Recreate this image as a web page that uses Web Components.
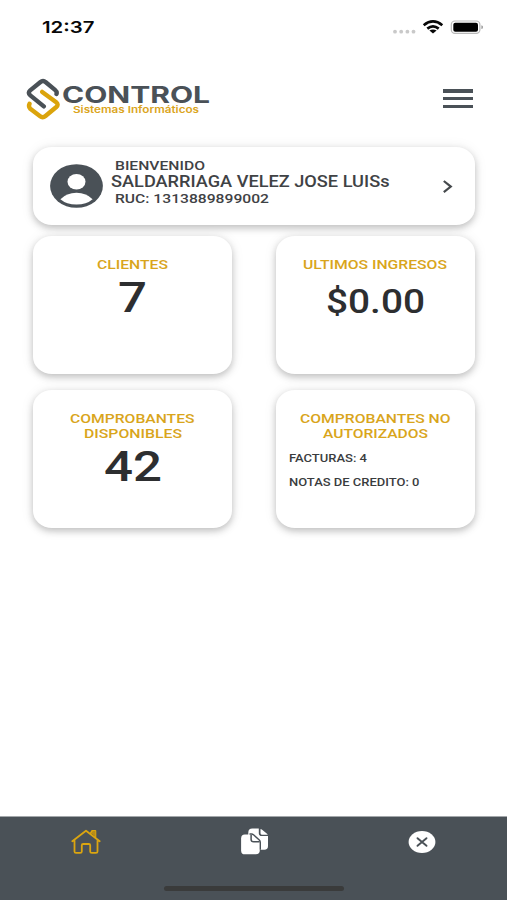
<!DOCTYPE html>
<html lang="es">
<head>
<meta charset="utf-8">
<title>SControl</title>
<style>
html,body{margin:0;padding:0;background:#fff}
body{width:507px;height:900px;overflow:hidden;font-family:Roboto,"Liberation Sans",sans-serif}
</style>
</head>
<body>
<control-app></control-app>
<script>
const define = (name, html) => customElements.define(name, class extends HTMLElement {
  constructor() {
    super();
    this.attachShadow({ mode: 'open' }).innerHTML = html;
  }
});

/* One line of text set to an exact width: w, h = box, base = baseline, size = font size */
customElements.define('fit-text', class extends HTMLElement {
  constructor() {
    super();
    this.attachShadow({ mode: 'open' });
  }
  connectedCallback() {
    const a = (n, d) => this.getAttribute(n) || d;
    this.shadowRoot.innerHTML = `<style>
      :host{display:block;flex:none}
      svg{display:block;overflow:visible}
      text{fill:currentColor;font-family:${a('font', 'Roboto')},"Liberation Sans",sans-serif;font-size:${a('size')}px;font-weight:${a('weight', 500)}}
    </style><svg width="${a('w')}" height="${a('h')}"><text x="0" y="${a('base')}" textLength="${a('w')}" lengthAdjust="spacingAndGlyphs"></text></svg>`;
    this.shadowRoot.querySelector('text').textContent = a('value', '');
  }
});

define('status-bar', `<style>
  :host{display:flex;height:54px;box-sizing:border-box;padding:17px 24px 0 42px;justify-content:space-between;align-items:flex-start;color:#080808}
  svg{display:block}
</style>
<fit-text value="12:37" w="52.5" h="20" base="16.3" size="16.5" weight="600" font="Inter"></fit-text>
<svg width="92" height="20" viewBox="391 17 92 20">
  <g fill="#c9c9c9"><circle cx="395" cy="31.7" r="1.9"/><circle cx="401.2" cy="31.7" r="1.9"/><circle cx="407.4" cy="31.7" r="1.9"/><circle cx="413.5" cy="31.7" r="1.9"/></g>
  <g fill="none" stroke="#080808" stroke-width="2.7"><path d="M423.7 25.2Q433 17.6 442.3 25.2"/><path d="M427.3 28.6Q433 24.1 438.7 28.6"/></g>
  <path d="M429.4 30.6Q433 28.2 436.6 30.6L433 33.4Z" fill="#080808"/>
  <rect x="451.3" y="21" width="28.6" height="12.4" rx="3.6" fill="#fff" stroke="#b9b9b9" stroke-width="1.2"/>
  <rect x="453.3" y="22.8" width="24.7" height="8.9" rx="2" fill="#000"/>
  <path d="M481.3 25.3q1.9 .4 1.9 1.9t-1.9 1.9z" fill="#a5a5a5"/>
</svg>`);

define('brand-logo', `<style>
  :host{display:flex;gap:1px}
  .mark{display:block}
  .words{padding-top:8px}
  .name{color:#4a5157}
  .tag{color:#dba51c;margin-left:11px}
</style>
<svg class="mark" width="35" height="42" viewBox="26 78 35 42" fill="none" stroke-width="4.4" stroke-linecap="round" stroke-linejoin="round">
  <path stroke="#dba40c" d="M42.2 91.9L56.2 102.3Q59 104.6 56.3 107L45.5 116Q42.7 118.4 39.8 116L30.3 108.8Q28.2 106.8 29.5 103.8"/>
  <path stroke="#4a5157" d="M43.8 106.4L30.3 95.4Q27.4 92.9 30.2 90.4L40.2 82.2Q43 80 45.8 82.2L55 89.9Q57.3 91.9 56.5 94"/>
</svg>
<div class="words">
  <fit-text class="name" value="CONTROL" w="148" h="18" base="16.6" size="22.4" weight="700" font="Inter"></fit-text>
  <fit-text class="tag" value="Sistemas Informáticos" w="126" h="12" base="9.2" size="9.6" weight="600" font="Inter"></fit-text>
</div>`);

define('menu-button', `<style>
  :host{display:flex;flex-direction:column;gap:4.3px;width:30px}
  i{height:3.4px;background:#4a5157}
</style><i></i><i></i><i></i>`);

define('app-header', `<style>
  :host{display:flex;justify-content:space-between;align-items:flex-start;height:93px;box-sizing:border-box;padding:24px 34px 0 26px}
  menu-button{margin-top:11.4px}
</style><brand-logo></brand-logo><menu-button></menu-button>`);

define('soft-card', `<style>
  :host{display:block;box-sizing:border-box;background:#fff;border-radius:19px/17px;box-shadow:0 3px 7px rgba(0,0,0,.21),0 1px 14px rgba(0,0,0,.08)}
</style><slot></slot>`);

define('welcome-card', `<style>
  :host{display:block;color:#3f4245}
  soft-card{display:flex;height:78px;padding:11.5px 20.5px 0 16.5px}
  .avatar{display:block;margin-top:5px}
  .lines{margin-left:8.3px;flex:1}
  .in{margin-left:3.5px}
  .go{display:block;margin-top:20px}
</style>
<soft-card>
  <svg class="avatar" width="53" height="44" viewBox="0 0 53 44"><ellipse cx="26.5" cy="22" rx="26.4" ry="21.8" fill="#4a5157"/><ellipse cx="26.5" cy="17.8" rx="9" ry="7.7" fill="#fff"/><path d="M10.4 35.2Q16.5 28.7 26.5 28.7T42.6 35.2Q36.5 40.5 26.5 40.5T10.4 35.2Z" fill="#fff"/></svg>
  <div class="lines">
    <fit-text class="in" value="BIENVENIDO" w="90" h="14" base="10.6" size="13.4"></fit-text>
    <fit-text value="SALDARRIAGA VELEZ JOSE LUISs" w="278.5" h="17" base="14.4" size="15.8"></fit-text>
    <fit-text class="in" value="RUC: 1313889899002" w="154" h="15" base="12.8" size="13.4"></fit-text>
  </div>
  <svg class="go" width="12" height="16" viewBox="0 0 12 16"><path d="M1.8 2L8.8 7.6L1.8 13.2" fill="none" stroke="#45494c" stroke-width="2.2"/></svg>
</soft-card>`);

define('stat-card', `<style>
  :host{display:block}
  soft-card{display:flex;flex-direction:column;align-items:center;height:138px;padding-top:21px}
  .title{display:flex;flex-direction:column;align-items:center;color:#d9a51b}
  .value{color:#2d2e30}
  .list{align-self:flex-start;margin-left:13px;color:#3a3c3e}
  ::slotted(*){display:block}
</style>
<soft-card><div class="title"><slot name="title"></slot></div><div class="value"><slot></slot></div><div class="list"><slot name="list"></slot></div></soft-card>`);

define('tab-bar', `<style>
  :host{display:grid;grid-template-columns:repeat(3,168px);grid-template-rows:49px auto;box-sizing:border-box;height:84px;background:#4a5157;border-top:1px solid #a3a7aa;justify-items:center;align-items:center;padding-left:1.5px}
  svg{display:block}
  .bar{grid-column:1/-1;align-self:start;width:180px;height:5px;margin-top:20px;border-radius:3px;background:#3a3b3b}
</style>
<svg width="30" height="26" viewBox="0 0 30 26" fill="none" stroke="#dba510" stroke-width="1.8" stroke-linejoin="round" stroke-linecap="round"><path d="M1.3 12.2L15 1.7L28.7 12.2M3.5 11V22.4Q3.5 23.8 5 23.8H9.2Q10.8 23.8 10.8 22.4V16.3Q10.8 15 12.2 15H17.8Q19.2 15 19.2 16.3V22.4Q19.2 23.8 20.8 23.8H25Q26.5 23.8 26.5 22.4V11M19.5 4.8L21 2H24.4V8.6"/><path d="M20.2 4.3L22 2H24.4V8Z" fill="#b98d17" stroke="none"/></svg>
<svg width="28" height="27" viewBox="-.8 0 28 27" overflow="visible"><path d="M11.5 .5H18V5.2Q18 8 21 8H27.2V18Q27.2 21.8 23.5 21.8H10Q7.5 21.8 7.5 18V4.5Q7.5 .5 11.5 .5Z" fill="#fff"/><path d="M19.7 .9Q20.3 .9 21 1.5L26.2 5.7Q26.8 6.3 26.8 6.7H21Q19.7 6.7 19.7 5.3Z" fill="#fff"/><path d="M4 6.5H10Q11 6.5 12 7.3L18 12.5Q19 13.5 19 15V22Q19 26.3 15 26.3H4.2Q.3 26.3 .3 22.4V10.4Q.3 6.5 4 6.5Z" fill="#fff"/><path d="M8.7 6H10.5Q11.8 6 13 7L18.5 12Q19.5 13 19.5 14.5V21.8" fill="none" stroke="#4a5157" stroke-width="1.4"/><path d="M10.3 7V11.4Q10.3 13.7 12.8 13.7H18.8" fill="none" stroke="#4a5157" stroke-width="1.5"/></svg>
<svg width="28" height="24" viewBox="0 0 28 24"><ellipse cx="14" cy="12" rx="13.4" ry="11" fill="#fff"/><path d="M9.5 8.2L18.5 15.8M18.5 8.2L9.5 15.8" stroke="#4a5157" stroke-width="1.9" stroke-linecap="round"/></svg>
<div class="bar"></div>`);

define('control-app', `<style>
  :host{display:flex;flex-direction:column;width:507px;height:900px;background:#fff}
  main{flex:1;padding:0 32.5px 0 33.3px}
  .grid{display:grid;grid-template-columns:198.5px 198.5px;justify-content:space-between;row-gap:16px;margin-top:11px}
</style>
<status-bar></status-bar>
<app-header></app-header>
<main>
  <welcome-card></welcome-card>
  <div class="grid">
    <stat-card>
      <fit-text slot="title" value="CLIENTES" w="71" h="15" base="12.3" size="13.6"></fit-text>
      <fit-text value="7" w="29" h="42" base="40" size="42.5"></fit-text>
    </stat-card>
    <stat-card>
      <fit-text slot="title" value="ULTIMOS INGRESOS" w="144" h="15" base="12.3" size="13.6"></fit-text>
      <fit-text value="$0.00" w="99" h="42" base="40.8" size="33"></fit-text>
    </stat-card>
    <stat-card>
      <fit-text slot="title" value="COMPROBANTES" w="124.5" h="15" base="12.4" size="13.6"></fit-text>
      <fit-text slot="title" value="DISPONIBLES" w="98" h="15" base="12.4" size="13.6"></fit-text>
      <fit-text value="42" w="58" h="42" base="40.3" size="42.5"></fit-text>
    </stat-card>
    <stat-card>
      <fit-text slot="title" value="COMPROBANTES NO" w="150.5" h="15" base="12.4" size="13.6"></fit-text>
      <fit-text slot="title" value="AUTORIZADOS" w="105" h="15" base="12.4" size="13.6"></fit-text>
      <fit-text slot="list" value="FACTURAS: 4" w="78" h="23.5" base="21.2" size="11.8"></fit-text>
      <fit-text slot="list" value="NOTAS DE CREDITO: 0" w="130.5" h="23.5" base="21.2" size="11.8"></fit-text>
    </stat-card>
  </div>
</main>
<tab-bar></tab-bar>`);
</script>
</body>
</html>
